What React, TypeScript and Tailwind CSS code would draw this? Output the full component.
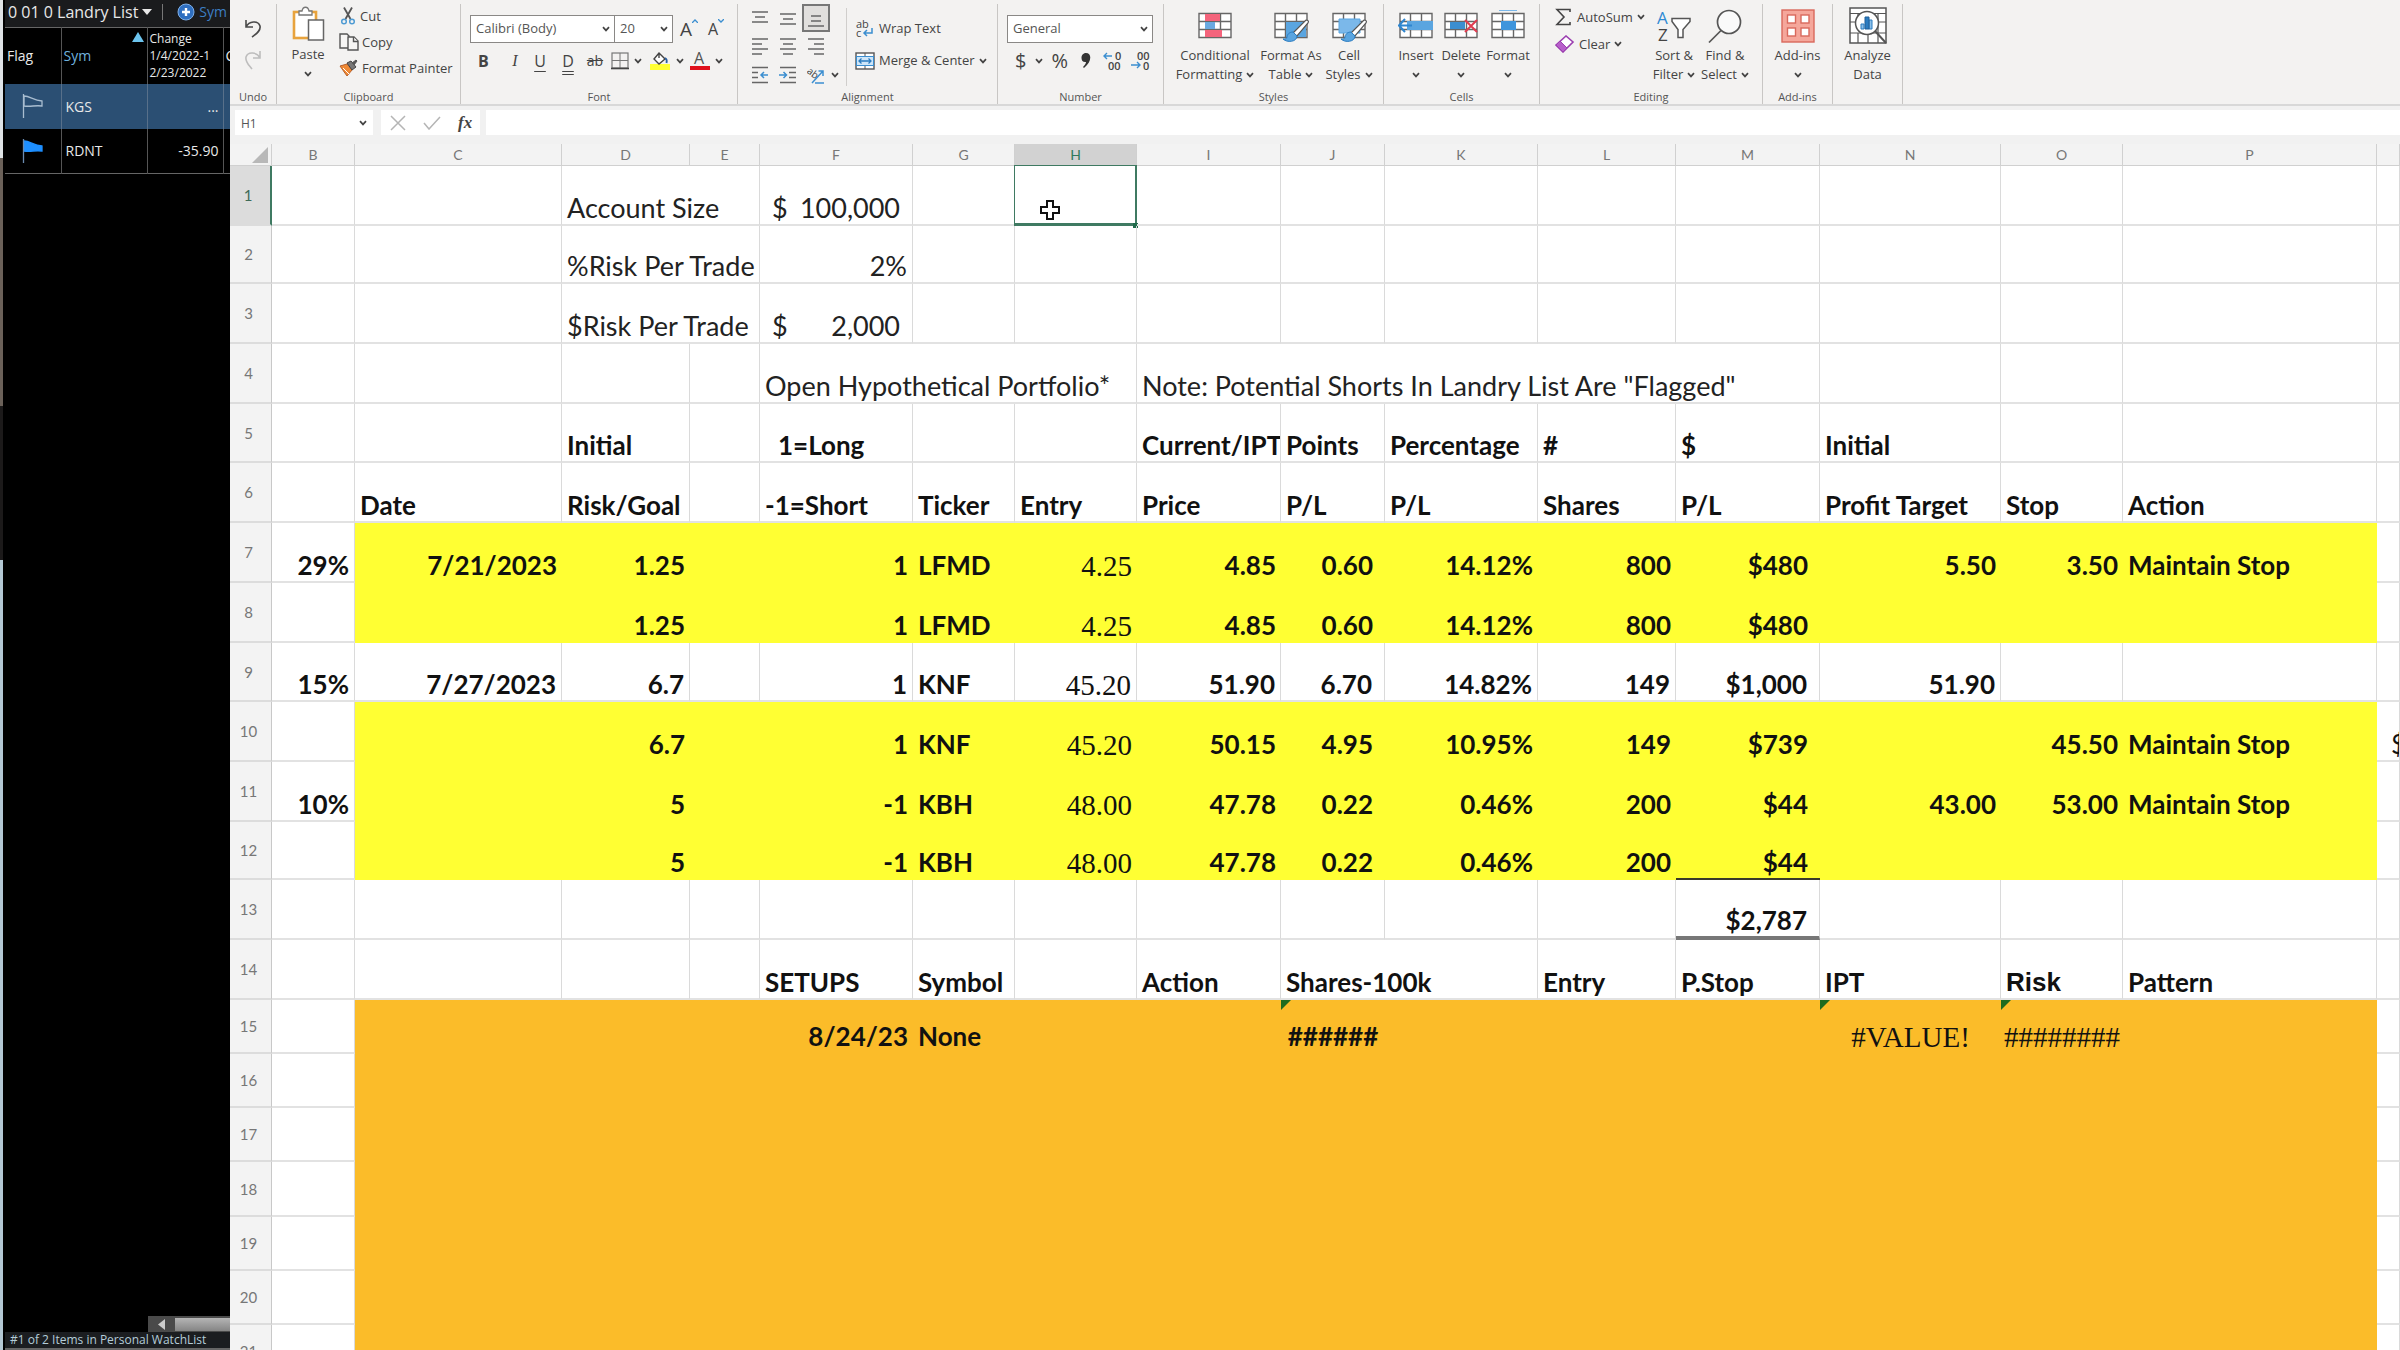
import type { ReactNode } from 'react'
import clsx from 'clsx'

/* ---------- Sheet data ---------- */

type Fill = 'yellow' | 'orange'

interface Cell {
  v?: string
  span?: number
  align?: 'left' | 'right' | 'center'
  font?: 'serif' | 'arial'
  pad?: string
  currency?: boolean
  flagged?: boolean
  border?: string
}

interface Row {
  n: number
  h: string
  fill?: Fill
  light?: boolean
  cells: Record<string, Cell>
}

const COLS = [
  { id: 'B', w: 'w-[83px]' },
  { id: 'C', w: 'w-[207px]' },
  { id: 'D', w: 'w-[128px]' },
  { id: 'E', w: 'w-[70px]' },
  { id: 'F', w: 'w-[153px]' },
  { id: 'G', w: 'w-[102px]' },
  { id: 'H', w: 'w-[122px]' },
  { id: 'I', w: 'w-[144px]' },
  { id: 'J', w: 'w-[104px]' },
  { id: 'K', w: 'w-[153px]' },
  { id: 'L', w: 'w-[138px]' },
  { id: 'M', w: 'w-[144px]' },
  { id: 'N', w: 'w-[181px]' },
  { id: 'O', w: 'w-[122px]' },
  { id: 'P', w: 'w-[254px]' },
  { id: 'Q', w: '' },
]

const l = (v: string): Cell => ({ v })
const r = (v: string): Cell => ({ v, align: 'right' })
const rp = (v: string): Cell => ({ v, align: 'right', pad: 'pr-3' })
const serif = (v: string): Cell => ({ v, align: 'right', font: 'serif' })

const ROWS: Row[] = [
  {
    n: 1,
    h: 'h-[60px]',
    light: true,
    cells: { D: { v: 'Account Size', span: 2 }, F: { v: '100,000', currency: true } },
  },
  { n: 2, h: 'h-[58px]', light: true, cells: { D: { v: '%Risk Per Trade', span: 2 }, F: r('2%') } },
  {
    n: 3,
    h: 'h-[60px]',
    light: true,
    cells: { D: { v: '$Risk Per Trade', span: 2 }, F: { v: '2,000', currency: true } },
  },
  {
    n: 4,
    h: 'h-[60px]',
    light: true,
    cells: {
      F: { v: 'Open Hypothetical Portfolio*', span: 3 },
      I: { v: 'Note: Potential Shorts In Landry List Are "Flagged"', span: 5 },
    },
  },
  {
    n: 5,
    h: 'h-[59px]',
    cells: {
      D: l('Initial'),
      F: { v: '1=Long', pad: 'pl-[18px]' },
      I: { v: 'Current/IPT', pad: 'pl-[5px]' },
      J: l('Points'),
      K: l('Percentage'),
      L: l('#'),
      M: l('$'),
      N: l('Initial'),
    },
  },
  {
    n: 6,
    h: 'h-[60px]',
    cells: {
      C: l('Date'),
      D: l('Risk/Goal'),
      F: l('-1=Short'),
      G: l('Ticker'),
      H: l('Entry'),
      I: l('Price'),
      J: l('P/L'),
      K: l('P/L'),
      L: l('Shares'),
      M: l('P/L'),
      N: l('Profit Target'),
      O: l('Stop'),
      P: l('Action'),
    },
  },
  {
    n: 7,
    h: 'h-[60px]',
    fill: 'yellow',
    cells: {
      B: r('29%'),
      C: r('7/21/2023'),
      D: r('1.25'),
      F: r('1'),
      G: l('LFMD'),
      H: serif('4.25'),
      I: r('4.85'),
      J: rp('0.60'),
      K: r('14.12%'),
      L: r('800'),
      M: rp('$480'),
      N: r('5.50'),
      O: r('3.50'),
      P: l('Maintain Stop'),
    },
  },
  {
    n: 8,
    h: 'h-[60px]',
    fill: 'yellow',
    cells: {
      D: r('1.25'),
      F: r('1'),
      G: l('LFMD'),
      H: serif('4.25'),
      I: r('4.85'),
      J: rp('0.60'),
      K: r('14.12%'),
      L: r('800'),
      M: rp('$480'),
    },
  },
  {
    n: 9,
    h: 'h-[59px]',
    cells: {
      B: r('15%'),
      C: r('7/27/2023'),
      D: r('6.7'),
      F: r('1'),
      G: l('KNF'),
      H: serif('45.20'),
      I: r('51.90'),
      J: rp('6.70'),
      K: r('14.82%'),
      L: r('149'),
      M: rp('$1,000'),
      N: r('51.90'),
    },
  },
  {
    n: 10,
    h: 'h-[60px]',
    fill: 'yellow',
    cells: {
      D: r('6.7'),
      F: r('1'),
      G: l('KNF'),
      H: serif('45.20'),
      I: r('50.15'),
      J: rp('4.95'),
      K: r('10.95%'),
      L: r('149'),
      M: rp('$739'),
      O: r('45.50'),
      P: l('Maintain Stop'),
      Q: { v: '$', pad: 'pl-[14px] font-normal' },
    },
  },
  {
    n: 11,
    h: 'h-[60px]',
    fill: 'yellow',
    cells: {
      B: r('10%'),
      D: r('5'),
      F: r('-1'),
      G: l('KBH'),
      H: serif('48.00'),
      I: r('47.78'),
      J: rp('0.22'),
      K: r('0.46%'),
      L: r('200'),
      M: rp('$44'),
      N: r('43.00'),
      O: r('53.00'),
      P: l('Maintain Stop'),
    },
  },
  {
    n: 12,
    h: 'h-[58px]',
    fill: 'yellow',
    cells: {
      D: r('5'),
      F: r('-1'),
      G: l('KBH'),
      H: serif('48.00'),
      I: r('47.78'),
      J: rp('0.22'),
      K: r('0.46%'),
      L: r('200'),
      M: { v: '$44', align: 'right', pad: 'pr-3', border: 'border-b-2 border-b-[#3a3a2a]' },
    },
  },
  {
    n: 13,
    h: 'h-[60px]',
    cells: {
      M: { v: '$2,787', align: 'right', pad: 'pr-3', border: 'border-b-4 border-b-[#777]' },
    },
  },
  {
    n: 14,
    h: 'h-[60px]',
    cells: {
      F: l('SETUPS'),
      G: l('Symbol'),
      I: l('Action'),
      J: { v: 'Shares-100k', span: 2 },
      L: l('Entry'),
      M: l('P.Stop'),
      N: l('IPT'),
      O: { v: 'Risk', font: 'arial' },
      P: l('Pattern'),
    },
  },
  {
    n: 15,
    h: 'h-[54px]',
    fill: 'orange',
    cells: {
      F: r('8/24/23'),
      G: l('None'),
      J: { v: '######', align: 'center', flagged: true },
      N: { v: '#VALUE!', align: 'center', font: 'serif', flagged: true },
      O: { v: '########', align: 'center', font: 'serif', pad: 'px-0', flagged: true },
    },
  },
  { n: 16, h: 'h-[54px]', fill: 'orange', cells: {} },
  { n: 17, h: 'h-[54px]', fill: 'orange', cells: {} },
  { n: 18, h: 'h-[55px]', fill: 'orange', cells: {} },
  { n: 19, h: 'h-[54px]', fill: 'orange', cells: {} },
  { n: 20, h: 'h-[54px]', fill: 'orange', cells: {} },
  { n: 21, h: 'h-[54px]', fill: 'orange', cells: {} },
]

/* ---------- Small icons ---------- */

function Chevron({ className = '' }: { className?: string }) {
  return (
    <svg viewBox="0 0 8 6" className={clsx('h-[6px] w-2 shrink-0', className)} fill="none" stroke="#444" strokeWidth="1.7">
      <path d="M1 1.2 4 4.4 7 1.2" />
    </svg>
  )
}

function UndoIcon({ redo = false }: { redo?: boolean }) {
  return (
    <svg viewBox="0 0 18 20" className="h-5 w-[18px]" fill="none" stroke={redo ? '#bdbdbd' : '#4a4a4a'} strokeWidth="1.6">
      {redo ? (
        <path d="M16 1v7H9M16 8C13 2 4 1 2 7c-1 5 3 8 6 12" />
      ) : (
        <path d="M2 1v7h7M2 8c3-6 12-7 14-1 1 5-4 8-8 11" />
      )}
    </svg>
  )
}

function PasteIcon() {
  return (
    <svg viewBox="0 0 34 36" className="h-9 w-[34px]" fill="none">
      <rect x="3" y="6" width="22" height="26" fill="#fff" stroke="#e8a33d" strokeWidth="2.6" />
      <path d="M8 9V5h3c1-5 6-5 7 0h3v4z" fill="#fff" stroke="#777" strokeWidth="1.3" />
      <rect x="17.5" y="14" width="15" height="20" fill="#fff" stroke="#666" strokeWidth="1.5" />
    </svg>
  )
}

function CutIcon() {
  return (
    <svg viewBox="0 0 18 18" className="h-[18px] w-[18px]" fill="none">
      <path d="M5 0.5 11.5 12M13 0.5 6.5 12" stroke="#555" strokeWidth="1.8" />
      <circle cx="5" cy="14.5" r="2.3" stroke="#4f9bd3" strokeWidth="1.5" />
      <circle cx="13" cy="14.5" r="2.3" stroke="#4f9bd3" strokeWidth="1.5" />
    </svg>
  )
}

function CopyIcon() {
  return (
    <svg viewBox="0 0 20 18" className="h-[18px] w-5" fill="#f6f5f4" stroke="#555" strokeWidth="1.4">
      <path d="M1 1h7l2 2v12H1z" />
      <path d="M9 4h6l4 4v9H9z" />
      <path d="M14.5 4v4.5H19" />
    </svg>
  )
}

function PainterIcon() {
  return (
    <svg viewBox="0 0 20 18" className="h-[18px] w-5">
      <path d="M1 7 8 5l5 6-5 6z" fill="#f08a35" stroke="#b8602a" />
      <path d="m4 9 6 6" stroke="#fff" />
      <path d="m8 4 4-2 5 6-4 3z" fill="#777" stroke="#444" />
      <path d="m13 4 4-3 1 1-3 4" fill="#555" stroke="#555" />
    </svg>
  )
}

function HLines({ rows }: { rows: [number, number, number][] }) {
  return (
    <svg viewBox="0 0 18 18" className="h-[18px] w-[18px]" stroke="#666" strokeWidth="1.5">
      {rows.map(([y, x1, x2]) => (
        <path key={y} d={`M${x1} ${y}H${x2}`} />
      ))}
    </svg>
  )
}

function IndentIcon({ right = false }: { right?: boolean }) {
  return (
    <svg viewBox="0 0 18 18" className="h-[18px] w-[18px]" fill="none" stroke="#666" strokeWidth="1.5">
      {right ? <path d="M1 1.5h16M10 6.5h7M10 11.5h7M1 16.5h16" /> : <path d="M1 1.5h16M1 6.5h6M1 11.5h6M1 16.5h16" />}
      {right ? (
        <path d="M0 9h7M4.5 6 7.5 9l-3 3" stroke="#3b8ed0" />
      ) : (
        <path d="M17 9h-6M13 6l-3 3 3 3" stroke="#3b8ed0" />
      )}
    </svg>
  )
}

function OrientationIcon() {
  return (
    <svg viewBox="0 0 20 20" className="h-5 w-5" fill="none">
      <text x="0" y="11" fontSize="10" fontFamily="Open Sans, sans-serif" fill="#444" transform="rotate(38 5 8)">
        ab
      </text>
      <path d="M5 18 16 6M11.5 6H16v5" stroke="#3b8ed0" strokeWidth="1.5" />
      <path d="M8 18h9" stroke="#3b8ed0" strokeWidth="1.5" />
    </svg>
  )
}

function WrapIcon() {
  return (
    <svg viewBox="0 0 20 20" className="h-5 w-5" fill="none">
      <text x="1" y="9" fontSize="11" fontFamily="Open Sans, sans-serif" fill="#444">
        ab
      </text>
      <text x="1" y="18" fontSize="11" fontFamily="Open Sans, sans-serif" fill="#444">
        c
      </text>
      <path d="M17 9v5H9M12 11l-3 3 3 3" stroke="#3b8ed0" strokeWidth="1.5" />
    </svg>
  )
}

function MergeIcon() {
  return (
    <svg viewBox="0 0 20 18" className="h-[18px] w-5" fill="none">
      <rect x="1" y="1" width="18" height="16" fill="#fff" stroke="#555" strokeWidth="1.4" />
      <path d="M10 1v4M10 13v4" stroke="#555" />
      <rect x="1.5" y="4.5" width="17" height="9" fill="#cfe6f8" stroke="#3b8ed0" />
      <path d="M4 9h12M6.5 6.5 4 9l2.5 2.5M13.5 6.5 16 9l-2.5 2.5" stroke="#2b7cc0" strokeWidth="1.3" />
    </svg>
  )
}

function BordersIcon() {
  return (
    <svg viewBox="0 0 18 18" className="h-[18px] w-[18px]" fill="none" stroke="#777">
      <rect x="1" y="1" width="16" height="15" strokeWidth="1.2" />
      <path d="M9 1v15M1 8.5h16" />
      <path d="M0 16.5h18" stroke="#444" strokeWidth="1.6" />
    </svg>
  )
}

function FillIcon() {
  return (
    <svg viewBox="0 0 20 20" className="h-5 w-5" fill="none">
      <path d="M0 13h20v6H0z" fill="#ffff33" />
      <path d="m9 2 6 6-6 5-5-5zM9 2v5" fill="#fff" stroke="#444" strokeWidth="1.4" />
      <path d="M15 7c2 1 2 3 1.5 5" stroke="#2b5fa0" strokeWidth="1.8" />
    </svg>
  )
}

function FontColorIcon() {
  return (
    <svg viewBox="0 0 20 20" className="h-5 w-5">
      <text x="4" y="13" fontSize="16" fontFamily="Open Sans, sans-serif" fill="#555">
        A
      </text>
      <path d="M0 15h20v4H0z" fill="#e0101c" />
    </svg>
  )
}

function DecimalIcon({ more = false }: { more?: boolean }) {
  return (
    <svg viewBox="0 0 20 20" className="h-5 w-5" fill="none">
      <g fontSize="11" fontWeight="600" fontFamily="Open Sans, sans-serif" fill="#444">
        <text x={more ? 12 : 6} y="9">
          {more ? '0' : '00'}
        </text>
        <text x={more ? 5 : 12} y="19">
          {more ? '00' : '0'}
        </text>
      </g>
      {more ? (
        <path d="M9 5H1M4 2 1 5l3 3" stroke="#3b8ed0" strokeWidth="1.4" />
      ) : (
        <path d="M0 14h9M6 11l3 3-3 3" stroke="#3b8ed0" strokeWidth="1.4" />
      )}
    </svg>
  )
}

function TableIcon({ children }: { children?: ReactNode }) {
  return (
    <svg viewBox="0 0 36 32" className="h-8 w-9" fill="none">
      <rect x="2" y="3" width="32" height="25" fill="#fff" />
      <path d="M2 3.5h32v24H2zM2 11.5h32M2 19.5h32M12.5 3v25M23.5 3v25" stroke="#666" strokeWidth="1.4" />
      {children}
    </svg>
  )
}

function Brush() {
  return (
    <>
      <path d="M33 10c2 0 3 1 2 3l-11 13-4-3z" fill="#fff" stroke="#555" strokeWidth="1.2" />
      <path d="M20 22c-4 0-6 3-6 5s-2 2-4 2c4 4 14 3 14-3z" fill="#5aa5e0" stroke="#2b7cc0" />
    </>
  )
}

function SigmaIcon() {
  return (
    <svg viewBox="0 0 18 18" className="h-[18px] w-[18px]" fill="none" stroke="#444" strokeWidth="1.6">
      <path d="M15 4V1.5H2L9 9l-7 7.5h13V14" />
    </svg>
  )
}

function EraserIcon() {
  return (
    <svg viewBox="0 0 20 18" className="h-[18px] w-5">
      <path d="m1 10 10-9 7 6-10 10z" fill="#fff" stroke="#9b3fb0" strokeWidth="1.6" />
      <path d="m1 10 4-4 7 7-4 4z" fill="#b75fca" stroke="#9b3fb0" />
    </svg>
  )
}

function SortIcon() {
  return (
    <svg viewBox="0 0 36 36" className="h-9 w-9" fill="none">
      <text x="1" y="16" fontSize="17" fontFamily="Open Sans, sans-serif" fill="#2f8ad4">
        A
      </text>
      <text x="2" y="33" fontSize="17" fontFamily="Open Sans, sans-serif" fill="#444">
        Z
      </text>
      <path d="M16 10.5h18v3l-7 8v8h-5v-8l-6-8z" fill="#fff" stroke="#555" strokeWidth="1.5" />
    </svg>
  )
}

function FindIcon() {
  return (
    <svg viewBox="0 0 36 36" className="h-9 w-9" fill="none" stroke="#555" strokeWidth="1.7">
      <circle cx="22" cy="14" r="11.5" fill="#fafafa" />
      <path d="M14 22.5 2 34.5" />
    </svg>
  )
}

function AddInsIcon() {
  return (
    <svg viewBox="0 0 36 36" className="h-9 w-9" fill="#fff" stroke="#d9695c" strokeWidth="1.4">
      <rect x="2" y="2" width="32" height="32" fill="#f5a79b" />
      <rect x="7.5" y="7" width="8" height="8" />
      <rect x="21" y="7" width="8" height="8" />
      <rect x="7.5" y="20" width="8" height="8" />
      <rect x="21" y="20" width="8" height="8" />
    </svg>
  )
}

function AnalyzeIcon() {
  return (
    <svg viewBox="0 0 38 38" className="h-[38px] w-[38px]" fill="none" stroke="#555" strokeWidth="1.5">
      <rect x="1" y="1" width="36" height="35" fill="#fff" />
      <path d="M1 6.5h36M1 15h36M1 26h36M9 26v10M19 26v10M29 6v30M9 6v9" strokeWidth="1.2" />
      <circle cx="18" cy="16" r="11.5" fill="#fff" />
      <path d="m26 24 11 12" strokeWidth="2" />
      <path d="M12 17h3v5h-3zM20 13h3v9h-3z" fill="#8cc0ea" stroke="#2b7cc0" strokeWidth="1" />
      <path d="M16 10h4v12h-4z" fill="#2b7cc0" stroke="#1f5f99" strokeWidth="1" />
    </svg>
  )
}

/* ---------- Watch list ---------- */

function Flag({ filled = false }: { filled?: boolean }) {
  return (
    <svg viewBox="0 0 22 26" className="mx-auto h-[26px] w-[22px]" fill={filled ? '#1e8fff' : 'none'} stroke={filled ? '#1e8fff' : '#a9bdd0'} strokeWidth="1.3">
      <path d="M2 3c6 0 9 4 18 5v5c-7-1-11 1-18 0z" />
      <path d="M1.5 1v24" stroke={filled ? '#6a8ab0' : '#a9bdd0'} />
    </svg>
  )
}

// Sliver of the desktop visible beside the window
function DesktopEdge() {
  return (
    <div className="flex w-[3px] shrink-0 flex-col">
      <div className="h-[158px] bg-[#dfe3e6]" />
      <div className="h-[248px] bg-[#6b6159]" />
      <div className="h-[154px] bg-[#1c1a1a]" />
      <div className="flex-1 bg-[#b4c8d4]" />
    </div>
  )
}

function WatchList() {
  return (
    <aside className="flex w-[227px] shrink-0 flex-col overflow-hidden border-l-2 border-black bg-black text-[14px] text-[#e8e8e8]">
      <div className="flex h-[27px] shrink-0 items-center bg-[#1a1b1d] pb-1 pl-[3px] text-[16px] whitespace-nowrap">
        <button className="flex items-center gap-1">
          0 01 0 Landry List
          <svg viewBox="0 0 10 6" className="h-[6px] w-[10px]" fill="#e8e8e8">
            <path d="M0 0h10L5 6z" />
          </svg>
        </button>
        <span className="ml-[10px] h-4 w-px bg-[#777]" />
        <button className="ml-[14px] flex items-center gap-1 text-[14px] text-[#3d7fc4]">
          <svg viewBox="0 0 18 18" className="h-[18px] w-[18px]">
            <circle cx="9" cy="9" r="8" fill="#2f6fc0" stroke="#7fb0e8" />
            <path d="M9 5v8M5 9h8" stroke="#fff" strokeWidth="2.4" />
          </svg>
          Sym
        </button>
      </div>
      <table className="w-full table-fixed border-collapse border-t border-[#666]">
        <colgroup>
          <col className="w-[56px]" />
          <col className="w-[86px]" />
          <col className="w-[76px]" />
          <col />
        </colgroup>
        <thead>
          <tr className="h-[56px]">
            <th className="border-r border-[#555] pl-[2px] text-left font-normal">Flag</th>
            <th className="relative border-r border-[#555] pl-[2px] text-left font-normal text-[#6fb1de]">
              Sym
              <svg viewBox="0 0 12 10" className="absolute top-1 right-[3px] h-[10px] w-3" fill="#6cc4ee">
                <path d="M6 0l6 10H0z" />
              </svg>
            </th>
            <th className="border-r border-[#555] pl-[2px] text-left text-[12px] leading-[17px] font-normal whitespace-nowrap">
              Change
              <br />
              1/4/2022-1
              <br />
              2/23/2022
            </th>
            <th className="pl-[2px] text-left font-normal">C</th>
          </tr>
        </thead>
        <tbody>
          <tr className="h-[45px] bg-[#2b4f73]">
            <td className="border-r border-[#58708a]">
              <Flag />
            </td>
            <td className="border-r border-[#58708a] pl-1">KGS</td>
            <td className="border-r border-[#58708a] pr-1 text-right">...</td>
            <td />
          </tr>
          <tr className="h-[45px] border-b border-[#666]">
            <td className="border-r border-[#555]">
              <Flag filled />
            </td>
            <td className="border-r border-[#555] pl-1">RDNT</td>
            <td className="border-r border-[#555] pr-1 text-right">-35.90</td>
            <td />
          </tr>
        </tbody>
      </table>
      <div className="mt-auto ml-[143px] flex h-4 items-center gap-[10px] bg-[#4a4a4a] pl-[10px]">
        <svg viewBox="0 0 7 11" className="h-[11px] w-[7px]" fill="#ccc">
          <path d="M7 0v11L0 5.5z" />
        </svg>
        <div className="h-[13px] flex-1 bg-gradient-to-b from-[#b5b5b5] to-[#858585]" />
      </div>
      <div className="flex h-[18px] items-center border-b-2 border-[#666] bg-[#1b1d20] pl-[5px] text-[12px] leading-4 whitespace-nowrap text-[#b4ccd8]">
        #1 of 2 Items in Personal WatchList
      </div>
    </aside>
  )
}

/* ---------- Ribbon ---------- */

function Group({ label, w, children }: { label: string; w: string; children: ReactNode }) {
  return (
    <section className={clsx('flex shrink-0 flex-col py-1', w)}>
      <div className="flex flex-1 border-r border-[#c8c6c4]">
        <div className="flex w-full flex-col">
          <div className="h-[86px]">{children}</div>
          <h2 className="h-[14px] text-center text-[11px] leading-[14px] text-[#555]">{label}</h2>
        </div>
      </div>
    </section>
  )
}

function BigButton({ icon, lines, arrow = 'none', w }: { icon: ReactNode; lines: string[]; arrow?: 'none' | 'inline' | 'below'; w: string }) {
  return (
    <button className={clsx('flex flex-col items-center pt-[2px] leading-[19px] whitespace-nowrap', w)}>
      <span className="flex h-10 items-center">{icon}</span>
      {lines.map((line, i) => (
        <span key={line} className="flex items-center gap-1">
          {line}
          {arrow === 'inline' && i === lines.length - 1 && <Chevron />}
        </span>
      ))}
      {arrow === 'below' && <Chevron className="mt-[7px]" />}
    </button>
  )
}

function Dropdown({ label, value, w }: { label: string; value: string; w: string }) {
  return (
    <div className={clsx('relative h-[28px] border border-[#8a8886] bg-white', w)}>
      <select aria-label={label} className="h-full w-full appearance-none bg-transparent pl-[5px] text-[13px] text-[#555]">
        <option>{value}</option>
      </select>
      <Chevron className="pointer-events-none absolute top-[10px] right-1" />
    </div>
  )
}

function Ribbon() {
  return (
    <div className="flex h-[106px] shrink-0 overflow-hidden border-b-2 border-[#d8d8d8] bg-[#f3f2f1] text-[13px] text-[#444]">
      <Group label="Undo" w="w-[47px]">
        <div className="flex flex-col items-center gap-[11px] pt-[15px]">
          <button aria-label="Undo">
            <UndoIcon />
          </button>
          <button aria-label="Redo">
            <UndoIcon redo />
          </button>
        </div>
      </Group>
      <Group label="Clipboard" w="w-[184px]">
        <div className="flex">
          <button className="flex w-[62px] flex-col items-center pt-[2px]">
            <PasteIcon />
            <span className="pt-[3px] leading-[19px]">Paste</span>
            <Chevron className="mt-[7px]" />
          </button>
          <div className="flex flex-col gap-[6px] leading-[20px] whitespace-nowrap">
            <button className="flex items-center gap-[3px] pt-[2px]">
              <CutIcon /> Cut
            </button>
            <button className="flex items-center gap-[3px]">
              <CopyIcon /> Copy
            </button>
            <button className="flex items-center gap-[3px]">
              <PainterIcon /> Format Painter
            </button>
          </div>
        </div>
      </Group>
      <Group label="Font" w="w-[277px]">
        <div className="flex flex-col gap-2 pt-[11px] pl-[9px]">
          <div className="flex items-center">
            <Dropdown label="Font" value="Calibri (Body)" w="w-[145px]" />
            <div className="-ml-px">
              <Dropdown label="Font size" value="20" w="w-[59px]" />
            </div>
            <button aria-label="Increase font size" className="ml-[7px] flex text-[19px] leading-5">
              A
              <svg viewBox="0 0 6 4" className="h-1 w-[6px]" fill="none" stroke="#3b8ed0" strokeWidth="1.3">
                <path d="M0 4 3 1l3 3" />
              </svg>
            </button>
            <button aria-label="Decrease font size" className="ml-[10px] flex text-[16px] leading-5">
              A
              <svg viewBox="0 0 6 4" className="h-1 w-[6px]" fill="none" stroke="#3b8ed0" strokeWidth="1.3">
                <path d="M0 0l3 3 3-3" />
              </svg>
            </button>
          </div>
          <div className="flex items-center pl-2 text-[16px] leading-5">
            <button className="w-[26px] text-left font-bold">B</button>
            <button className="w-[22px] text-center font-['Liberation_Serif',serif] italic">I</button>
            <button className="w-[28px] text-center underline underline-offset-4">U</button>
            <button className="w-[28px] text-center underline decoration-double underline-offset-4">D</button>
            <button className="w-[26px] text-center text-[14px] line-through">ab</button>
            <button aria-label="Borders" className="ml-[3px] flex items-center gap-[5px]">
              <BordersIcon />
              <Chevron />
            </button>
            <button aria-label="Fill color" className="ml-2 flex items-center gap-[6px]">
              <FillIcon />
              <Chevron />
            </button>
            <button aria-label="Font color" className="ml-[6px] flex items-center gap-[5px]">
              <FontColorIcon />
              <Chevron />
            </button>
          </div>
        </div>
      </Group>
      <Group label="Alignment" w="w-[260px]">
        <div className="flex pl-[13px]">
          <div className="grid grid-cols-[28px_28px_39px] gap-y-[2px]">
            <button aria-label="Top align" className="h-[27px]">
              <HLines rows={[[3, 1, 17], [8, 4, 14], [13, 1, 17]]} />
            </button>
            <button aria-label="Middle align">
              <HLines rows={[[5, 1, 17], [10, 4, 14], [15, 1, 17]]} />
            </button>
            <button aria-label="Bottom align" className="-ml-[5px] flex h-[28px] w-7 items-end justify-center border-2 border-[#777] bg-[#e1dfdd] pb-[2px]">
              <HLines rows={[[6, 4, 14], [11, 4, 14], [16, 1, 17]]} />
            </button>
            <button aria-label="Align left" className="h-[26px]">
              <HLines rows={[[1, 1, 17], [6, 1, 11], [11, 1, 17], [16, 1, 11]]} />
            </button>
            <button aria-label="Center">
              <HLines rows={[[1, 1, 17], [6, 4, 14], [11, 1, 17], [16, 4, 14]]} />
            </button>
            <button aria-label="Align right">
              <HLines rows={[[1, 1, 17], [6, 7, 17], [11, 1, 17], [16, 7, 17]]} />
            </button>
            <button aria-label="Decrease indent" className="h-[26px]">
              <IndentIcon />
            </button>
            <button aria-label="Increase indent">
              <IndentIcon right />
            </button>
            <button aria-label="Orientation" className="flex items-center gap-1">
              <OrientationIcon />
              <Chevron />
            </button>
          </div>
          <div className="mt-1 flex h-[78px] flex-col gap-3 border-l border-[#d0cecc] pt-[11px] pl-2 whitespace-nowrap">
            <button className="flex h-5 items-center gap-1">
              <WrapIcon /> Wrap Text
            </button>
            <button className="flex h-5 items-center gap-1">
              <MergeIcon /> Merge &amp; Center <Chevron />
            </button>
          </div>
        </div>
      </Group>
      <Group label="Number" w="w-[166px]">
        <div className="flex flex-col gap-2 pt-[11px] pl-[9px]">
          <Dropdown label="Number format" value="General" w="w-[146px]" />
          <div className="flex h-5 items-center pl-2 text-[20px] leading-5">
            <button aria-label="Accounting format" className="flex items-center gap-[9px]">
              $ <Chevron />
            </button>
            <button aria-label="Percent style" className="ml-2">
              %
            </button>
            <button aria-label="Comma style" className="ml-[13px]">
              <svg viewBox="0 0 10 16" className="h-4 w-[10px]" fill="#333">
                <path d="M5 0c6 0 6 9-2 15l-1-1c2-2 3-4 3-5-6 1-6-9 0-9z" />
              </svg>
            </button>
            <button aria-label="Increase decimal" className="ml-3">
              <DecimalIcon more />
            </button>
            <button aria-label="Decrease decimal" className="ml-2">
              <DecimalIcon />
            </button>
          </div>
        </div>
      </Group>
      <Group label="Styles" w="w-[220px]">
        <div className="flex pl-[11px]">
          <BigButton
            w="w-[80px]"
            arrow="inline"
            lines={['Conditional', 'Formatting']}
            icon={
              <TableIcon>
                <path d="M8 4h15v7H8zM8 20h17v7H8z" fill="#f4647c" />
                <path d="M8 12h10v7H8z" fill="#6aa9e0" />
              </TableIcon>
            }
          />
          <BigButton
            w="w-[72px]"
            arrow="inline"
            lines={['Format As', 'Table']}
            icon={
              <TableIcon>
                <path d="M13 12h20v15H13z" fill="#5aa5e0" />
                <Brush />
              </TableIcon>
            }
          />
          <BigButton
            w="w-[44px]"
            arrow="inline"
            lines={['Cell', 'Styles']}
            icon={
              <TableIcon>
                <path d="M8 9h21v14H8z" fill="#7bb8ea" stroke="#5aa5e0" />
                <Brush />
              </TableIcon>
            }
          />
        </div>
      </Group>
      <Group label="Cells" w="w-[156px]">
        <div className="flex pl-[9px]">
          <BigButton
            w="w-[46px]"
            arrow="below"
            lines={['Insert']}
            icon={
              <TableIcon>
                <path d="M9 11h26v9H9z" fill="#5aa5e0" />
                <path d="M14 15.5H1M7 9l-6 6.5L7 22" stroke="#2f86cf" strokeWidth="2" />
              </TableIcon>
            }
          />
          <BigButton
            w="w-[44px]"
            arrow="below"
            lines={['Delete']}
            icon={
              <TableIcon>
                <path d="M7 12h15v7H7z" fill="#3b8ed0" />
                <path d="m22 10 12 12M34 10 22 22" stroke="#e03c50" strokeWidth="2" />
              </TableIcon>
            }
          />
          <BigButton
            w="w-[50px]"
            arrow="below"
            lines={['Format']}
            icon={
              <TableIcon>
                <path d="M11 11h15v9H11z" fill="#3f95dc" />
                <path d="M9 0h18" stroke="#7bb8ea" strokeWidth="2" />
              </TableIcon>
            }
          />
        </div>
      </Group>
      <Group label="Editing" w="w-[223px]">
        <div className="flex pl-[15px]">
          <div className="flex w-[94px] flex-col gap-[7px] pt-[3px] leading-5 whitespace-nowrap">
            <button className="flex items-center gap-1">
              <SigmaIcon /> AutoSum <Chevron />
            </button>
            <button className="flex items-center gap-1">
              <EraserIcon /> Clear <Chevron />
            </button>
          </div>
          <BigButton w="w-[50px]" arrow="inline" lines={['Sort &', 'Filter']} icon={<SortIcon />} />
          <BigButton w="w-[52px]" arrow="inline" lines={['Find &', 'Select']} icon={<FindIcon />} />
        </div>
      </Group>
      <Group label="Add-ins" w="w-[70px]">
        <BigButton w="w-full" arrow="below" lines={['Add-ins']} icon={<AddInsIcon />} />
      </Group>
      <Group label="" w="w-[70px]">
        <BigButton w="w-full" lines={['Analyze', 'Data']} icon={<AnalyzeIcon />} />
      </Group>
    </div>
  )
}

function FormulaBar() {
  return (
    <div className="flex h-[38px] shrink-0 bg-[#f1f1f1] pt-1 pb-[9px] pl-[5px]">
      <div className="relative w-[138px] bg-white">
        <input aria-label="Name box" defaultValue="H1" className="h-full w-full bg-transparent pl-[6px] text-[12px] text-[#555]" />
        <Chevron className="absolute top-[10px] right-[6px]" />
      </div>
      <div className="ml-2 flex w-[99px] items-center gap-[17px] bg-white pl-[9px]">
        <button aria-label="Cancel">
          <svg viewBox="0 0 16 16" className="h-4 w-4" stroke="#b5b5b5" strokeWidth="1.5">
            <path d="m1 1 14 14M15 1 1 15" />
          </svg>
        </button>
        <button aria-label="Enter">
          <svg viewBox="0 0 18 14" className="h-[14px] w-[18px]" fill="none" stroke="#b5b5b5" strokeWidth="1.5">
            <path d="m1 7 5 6L17 1" />
          </svg>
        </button>
        <button aria-label="Insert function" className="font-['Liberation_Serif',serif] text-[17px] leading-5 font-bold text-[#444] italic">
          fx
        </button>
      </div>
      <input aria-label="Formula" className="ml-[6px] min-w-0 flex-1 bg-white" />
    </div>
  )
}

/* ---------- Sheet ---------- */

function Selection() {
  return (
    <>
      <span className="absolute -top-px -right-px -bottom-[2px] -left-px border border-r-2 border-b-[3px] border-[#3f7a62]" />
      <span className="absolute -right-[2px] -bottom-[4px] h-[5px] w-[5px] bg-[#1f6b4a]" />
      <svg viewBox="0 0 22 22" className="absolute top-[33px] left-[24px] h-[22px] w-[22px]" fill="#fff" stroke="#111" strokeWidth="2">
        <path d="M8 2h6v6h6v6h-6v6H8v-6H2V8h6z" />
      </svg>
    </>
  )
}

function SheetCell({ col, row, cell = {} }: { col: string; row: Row; cell?: Cell }) {
  const filled = col !== 'B' && col !== 'Q' ? row.fill : undefined
  return (
    <td
      colSpan={cell.span}
      className={clsx(
        'relative p-0 align-bottom',
        filled === 'yellow' && 'bg-[#ffff33]',
        filled === 'orange' && 'bg-[#fbbc29]',
        !filled && 'border-r border-r-[#dadada]',
        cell.border ?? (!filled && 'border-b-2 border-b-[#e2e2e2]'),
      )}
    >
      {cell.v && (
        <div
          className={clsx(
            'overflow-hidden whitespace-nowrap',
            cell.currency ? 'flex justify-between px-3' : cell.pad ?? 'px-[5px]',
            filled && !cell.border && 'mb-[2px]',
            cell.align === 'right' && 'text-right',
            cell.align === 'center' && 'text-center',
            cell.font === 'serif' ? "font-['Liberation_Serif',serif] text-[29px] leading-[30px] font-normal" : 'leading-[32px]',
            cell.font === 'arial' && "font-['Liberation_Sans',sans-serif]",
          )}
        >
          {cell.currency && <span>$</span>}
          {cell.currency ? <span>{cell.v}</span> : cell.v}
        </div>
      )}
      {cell.flagged && (
        <svg viewBox="0 0 10 10" className="absolute top-0 left-0 h-[10px] w-[10px]" fill="#1e6b1e">
          <path d="M0 0h10L0 10z" />
        </svg>
      )}
      {col === 'H' && row.n === 1 && <Selection />}
    </td>
  )
}

function SheetRow({ row }: { row: Row }) {
  const tds: ReactNode[] = []
  for (let i = 0; i < COLS.length; ) {
    const { id } = COLS[i]
    const cell = row.cells[id]
    tds.push(<SheetCell key={id} col={id} row={row} cell={cell} />)
    i += cell?.span ?? 1
  }
  return (
    <tr className={clsx(row.h, row.light ? 'text-[27px] font-normal text-[#222]' : 'text-[26px] font-bold text-[#111]')}>
      <th
        className={clsx(
          'border-b-2 border-b-[#dcdcdc] pr-1 text-center text-[15px] leading-5 font-normal',
          row.n === 1 ? 'border-r-2 border-r-[#3f7a62] bg-[#dcdcdc] text-[#3f6a58]' : 'border-r border-r-[#c8c8c8] bg-[#f3f3f3] text-[#777]',
        )}
      >
        {row.n}
      </th>
      {tds}
    </tr>
  )
}

function Sheet() {
  return (
    <table className="w-full table-fixed border-separate border-spacing-0 font-[Lato,sans-serif]">
      <colgroup>
        <col className="w-[42px]" />
        {COLS.map((c) => (
          <col key={c.id} className={c.w} />
        ))}
      </colgroup>
      <thead>
        <tr className="h-[22px] bg-[#f3f3f3] text-[14px] leading-5 text-[#777]">
          <th className="border-r border-b border-[#d0d0d0] p-0">
            <svg viewBox="0 0 16 16" className="mr-[3px] ml-auto h-4 w-4" fill="#b8b8b8">
              <path d="M16 0v16H0z" />
            </svg>
          </th>
          {COLS.map((c) => (
            <th
              key={c.id}
              className={clsx(
                'border-r border-b border-[#d0d0d0] p-0 font-normal',
                c.id === 'H' && 'bg-[#d2d2d2] text-[#2f7a5c]',
              )}
            >
              {c.id === 'Q' ? '' : c.id}
            </th>
          ))}
        </tr>
      </thead>
      <tbody>
        {ROWS.map((row) => (
          <SheetRow key={row.n} row={row} />
        ))}
      </tbody>
    </table>
  )
}

export default function App() {
  return (
    <div className="flex h-screen w-full overflow-hidden bg-white font-['Open_Sans',sans-serif]">
      <DesktopEdge />
      <WatchList />
      <main className="flex min-w-0 flex-1 flex-col overflow-hidden">
        <Ribbon />
        <FormulaBar />
        <Sheet />
      </main>
    </div>
  )
}
